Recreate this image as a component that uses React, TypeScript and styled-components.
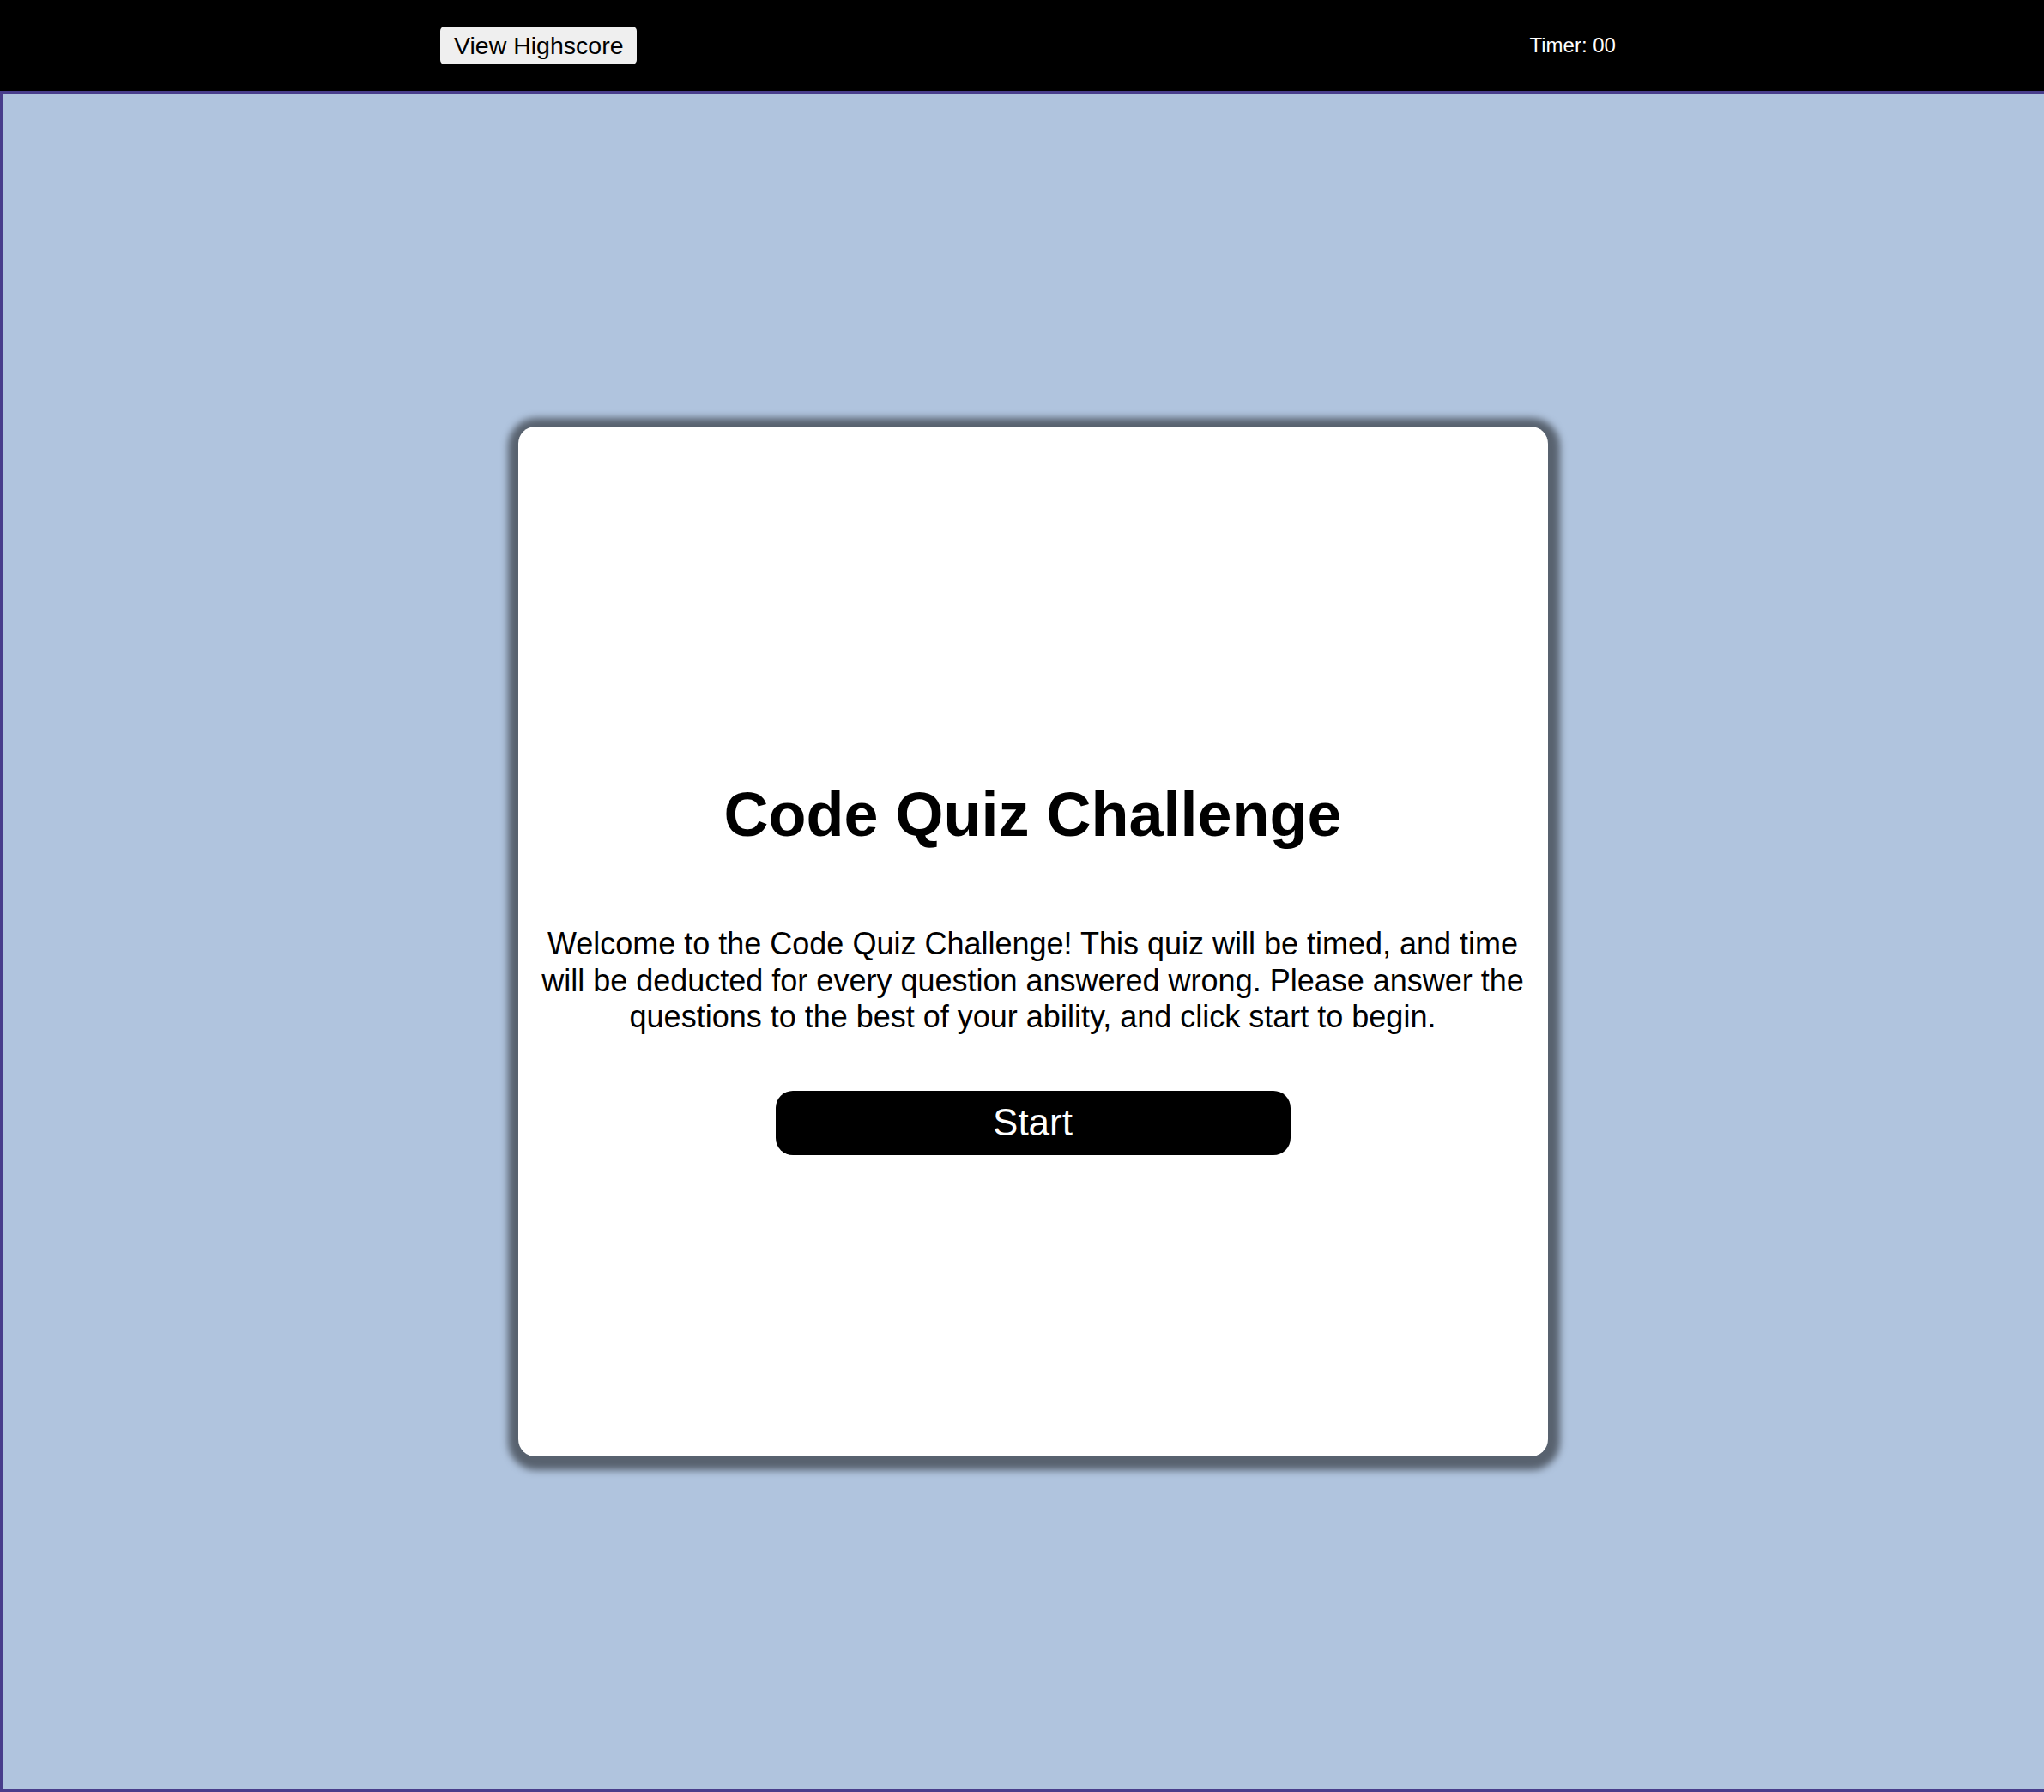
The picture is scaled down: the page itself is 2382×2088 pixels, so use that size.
import React from "react";
import styled, { createGlobalStyle } from "styled-components";

const GlobalStyle = createGlobalStyle`
  html, body {
    margin: 0;
    padding: 0;
  }
  body {
    font-family: "Liberation Sans", Arial, sans-serif;
    background: #b0c4de;
  }
  * {
    box-sizing: border-box;
  }
`;

const Header = styled.header`
  display: flex;
  align-items: center;
  height: 106px;
  padding-left: 513px;
  background: #000000;
`;

const HighscoreButton = styled.button`
  height: 44px;
  padding: 0 16px;
  border: none;
  border-radius: 5px;
  background: #efefef;
  color: #000000;
  font-family: "Liberation Sans", Arial, sans-serif;
  font-size: 28.5px;
  cursor: pointer;
`;

const Timer = styled.div`
  margin-left: 1040px;
  color: #ffffff;
  font-size: 24px;
`;

const Main = styled.main`
  display: flex;
  align-items: center;
  justify-content: center;
  width: 100%;
  height: calc(100vh - 106px);
  padding-left: 22px;
  border: 3px solid #483d8b;
  border-right: none;
  background: #b0c4de;
`;

const Card = styled.section`
  display: flex;
  flex-direction: column;
  align-items: center;
  justify-content: center;
  width: 1200px;
  height: 1200px;
  padding: 60px 24px 0;
  border-radius: 20px;
  background: #ffffff;
  box-shadow: 1px 3px 9px 13px rgba(0, 0, 0, 0.5);
`;

const Title = styled.h1`
  margin: 0 0 89px;
  font-size: 72px;
  font-weight: 700;
  color: #000000;
  text-align: center;
`;

const Intro = styled.p`
  margin: 0 0 64px;
  font-size: 36px;
  line-height: 42.5px;
  color: #000000;
  text-align: center;
`;

const StartButton = styled.button`
  width: 600px;
  height: 75px;
  border: none;
  border-radius: 20px;
  background: #000000;
  color: #ffffff;
  font-family: "Liberation Sans", Arial, sans-serif;
  font-size: 44px;
  cursor: pointer;
`;

export default function App() {
  return (
    <>
      <GlobalStyle />
      <Header>
        <HighscoreButton>View Highscore</HighscoreButton>
        <Timer>Timer: 00</Timer>
      </Header>
      <Main>
        <Card>
          <Title>Code Quiz Challenge</Title>
          <Intro>
            Welcome to the Code Quiz Challenge! This quiz will be timed, and time
            will be deducted for every question answered wrong. Please answer the
            questions to the best of your ability, and click start to begin.
          </Intro>
          <StartButton>Start</StartButton>
        </Card>
      </Main>
    </>
  );
}
